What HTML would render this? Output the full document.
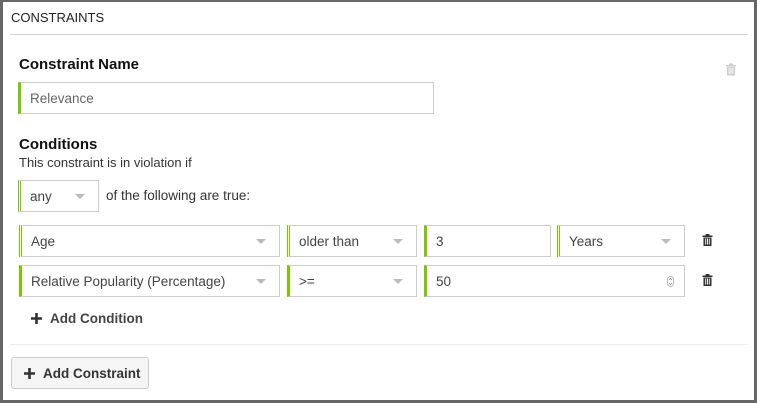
<!DOCTYPE html>
<html><head><meta charset="utf-8"><style>
*{box-sizing:border-box;margin:0;padding:0}
body{width:757px;height:403px;background:#fff;font-family:"Liberation Sans",sans-serif;color:#333;position:relative;overflow:hidden}
.frame{position:absolute;left:0;top:0;width:757px;height:403px;border:3px solid #676767;border-top-width:2px;border-right-width:3px}
.a{position:absolute}
.hdr{left:11px;top:10px;font-size:13px;color:#222}
.line{height:1px;background:#d5d5d5;left:10px;width:738px}
.h{font-weight:bold;font-size:15px;color:#111}
.box{position:absolute;border:1px solid #ccc;background:#fff;font-size:13.5px;color:#444;display:flex;align-items:center;padding-left:9px}
.g{border-left:3px solid #7cc800}
.gd{border-left:3px double #7cc800}
.car{position:absolute;right:13px;top:13px;width:0;height:0;border-left:5px solid transparent;border-right:5px solid transparent;border-top:5px solid #bbb}
.trash{position:absolute}
.plus{display:inline-block;vertical-align:-1px;margin-right:8px}
</style></head><body>
<div class="frame"></div>
<div class="a hdr">CONSTRAINTS</div>
<div class="a line" style="top:34px"></div>
<div class="a h" style="left:19px;top:56px">Constraint Name</div>
<div class="box g" style="left:18px;top:82px;width:416px;height:32px;color:#666">Relevance</div>
<svg class="trash" style="left:725px;top:63px" width="12" height="13" viewBox="0 0 12 13"><rect x="1" y="2" width="10" height="1.5" fill="#ccc"/><rect x="4" y="0.5" width="4" height="2" fill="#ccc"/><path d="M2 4h8v8.5H2z" fill="#ccc"/><path d="M4.2 5v6M6 5v6M7.8 5v6" stroke="#fff" stroke-width="0.9"/></svg>
<div class="a h" style="left:19px;top:136px">Conditions</div>
<div class="a" style="left:19px;top:155px;font-size:13px;color:#333">This constraint is in violation if</div>
<div class="box gd" style="left:18px;top:180px;width:81px;height:32px">any<span class="car" style="top:13px"></span></div>
<div class="a" style="left:106px;top:188px;font-size:13.5px;color:#333">of the following are true:</div>

<div class="box gd" style="left:19px;top:225px;width:261px;height:32px">Age<span class="car"></span></div>
<div class="box gd" style="left:287px;top:225px;width:130px;height:32px">older than<span class="car"></span></div>
<div class="box g" style="left:424px;top:225px;width:127px;height:32px">3</div>
<div class="box gd" style="left:557px;top:225px;width:128px;height:32px">Years<span class="car"></span></div>
<svg class="trash" style="left:702px;top:234px" width="11" height="12" viewBox="0 0 11 12"><rect x="0.5" y="1.5" width="10" height="1.5" fill="#333"/><rect x="3.5" y="0" width="4" height="2" fill="#333"/><path d="M1.5 3.5h8v8.5h-8z" fill="#333"/><path d="M3.7 4.5v6M5.5 4.5v6M7.3 4.5v6" stroke="#fff" stroke-width="0.9"/></svg>

<div class="box g" style="left:19px;top:265px;width:261px;height:32px">Relative Popularity (Percentage)<span class="car"></span></div>
<div class="box g" style="left:287px;top:265px;width:130px;height:32px">&gt;=<span class="car"></span></div>
<div class="box g" style="left:424px;top:265px;width:261px;height:32px">50<svg style="position:absolute;right:10px;top:10px" width="7" height="11" viewBox="0 0 7 11"><rect x="0.5" y="0.5" width="6" height="10" rx="3" fill="none" stroke="#bbb"/><path d="M2 4l1.5-1.5L5 4M2 7l1.5 1.5L5 7" fill="none" stroke="#888" stroke-width="0.8"/></svg></div>
<svg class="trash" style="left:702px;top:274px" width="11" height="12" viewBox="0 0 11 12"><rect x="0.5" y="1.5" width="10" height="1.5" fill="#333"/><rect x="3.5" y="0" width="4" height="2" fill="#333"/><path d="M1.5 3.5h8v8.5h-8z" fill="#333"/><path d="M3.7 4.5v6M5.5 4.5v6M7.3 4.5v6" stroke="#fff" stroke-width="0.9"/></svg>

<div class="a" style="left:31px;top:311px;font-size:13.5px;color:#444;font-weight:bold"><svg class="plus" width="11" height="11" viewBox="0 0 11 11"><path d="M5.5 0v11M0 5.5h11" stroke="#333" stroke-width="2.6"/></svg>Add Condition</div>
<div class="a line" style="top:344px;background:#eee"></div>
<div class="a" style="left:11px;top:357px;width:138px;height:32px;border:1px solid #ccc;border-radius:3px;background:#f5f5f5;font-size:13.5px;color:#333;font-weight:bold;display:flex;align-items:center;padding-left:12px"><svg class="plus" width="11" height="11" viewBox="0 0 11 11"><path d="M5.5 0v11M0 5.5h11" stroke="#333" stroke-width="2.6"/></svg>Add Constraint</div>
</body></html>
